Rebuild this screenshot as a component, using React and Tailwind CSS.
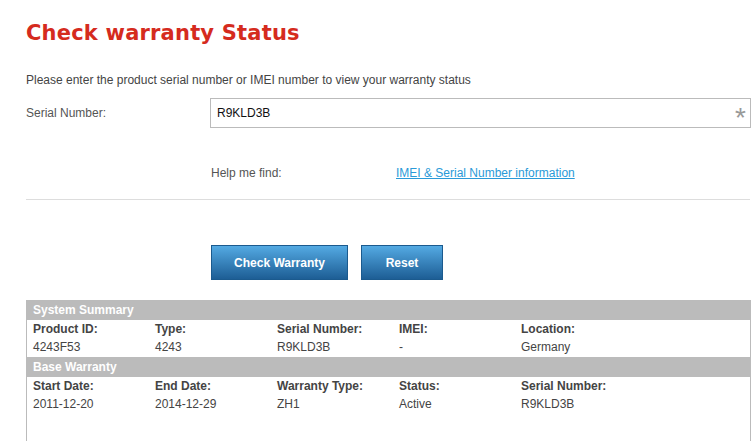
import React from 'react';

const summary = [
  { label: 'Product ID:', value: '4243F53' },
  { label: 'Type:', value: '4243' },
  { label: 'Serial Number:', value: 'R9KLD3B' },
  { label: 'IMEI:', value: '-' },
  { label: 'Location:', value: 'Germany' },
];

const warranty = [
  { label: 'Start Date:', value: '2011-12-20' },
  { label: 'End Date:', value: '2014-12-29' },
  { label: 'Warranty Type:', value: 'ZH1' },
  { label: 'Status:', value: 'Active' },
  { label: 'Serial Number:', value: 'R9KLD3B' },
];

function Section({ title, items }) {
  return (
    <>
      <div className="h-[20px] bg-[#bbbbbb] px-[6px] text-white font-bold leading-[20px]">{title}</div>
      <div className="grid grid-cols-[122px_122px_122px_122px_1fr] px-[6px] pt-[0px] pb-[1px]">
        {items.map((it) => (
          <div key={it.label} className="flex flex-col">
            <span className="font-bold leading-[18px] text-[#444]">{it.label}</span>
            <span className="leading-[18px] text-[#444]">{it.value}</span>
          </div>
        ))}
      </div>
    </>
  );
}

export default function App() {
  return (
    <div className="w-[754px] h-[441px] bg-white overflow-hidden pl-[26px] pr-[3px] text-[12px] text-[#555] font-['Liberation_Sans',Arial,sans-serif]">
      <h1 className="pt-[18px] text-[21px] leading-[30px] font-bold text-[#d52b1e] font-['DejaVu_Sans',sans-serif] tracking-[0.2px]">
        Check warranty Status
      </h1>

      <p className="mt-[24px] leading-[16px] text-[#444]">
        Please enter the product serial number or IMEI number to view your warranty status
      </p>

      <div className="mt-[10px] flex items-center">
        <label className="w-[184px] text-[#555]">Serial Number:</label>
        <div className="flex-1 h-[30px] border border-[#bbb] flex items-center justify-between pl-[6px] pr-[4px]">
          <span className="text-[#111]">R9KLD3B</span>
          <span className="text-[#999] text-[28px] leading-none pt-[9px]">*</span>
        </div>
      </div>

      <div className="mt-[37px] flex items-center pl-[185px] leading-[16px]">
        <span className="w-[185px] text-[#555]">Help me find:</span>
        <a className="text-[#2a9ad8] underline">IMEI &amp; Serial Number information</a>
      </div>

      <div className="mt-[18px] mr-[1px] border-t border-[#dddddd]"></div>

      <div className="mt-[45px] flex gap-[13px] pl-[185px]">
        <button className="w-[137px] h-[35px] border border-[#1b5a8e] bg-gradient-to-b from-[#54aae3] to-[#1d5e95] text-white font-bold text-[12px]">
          Check Warranty
        </button>
        <button className="w-[82px] h-[35px] border border-[#1b5a8e] bg-gradient-to-b from-[#54aae3] to-[#1d5e95] text-white font-bold text-[12px]">
          Reset
        </button>
      </div>

      <div className="mt-[20px] border-l border-r border-[#bbbbbb] h-[200px]">
        <Section title="System Summary" items={summary} />
        <Section title="Base Warranty" items={warranty} />
      </div>
    </div>
  );
}
